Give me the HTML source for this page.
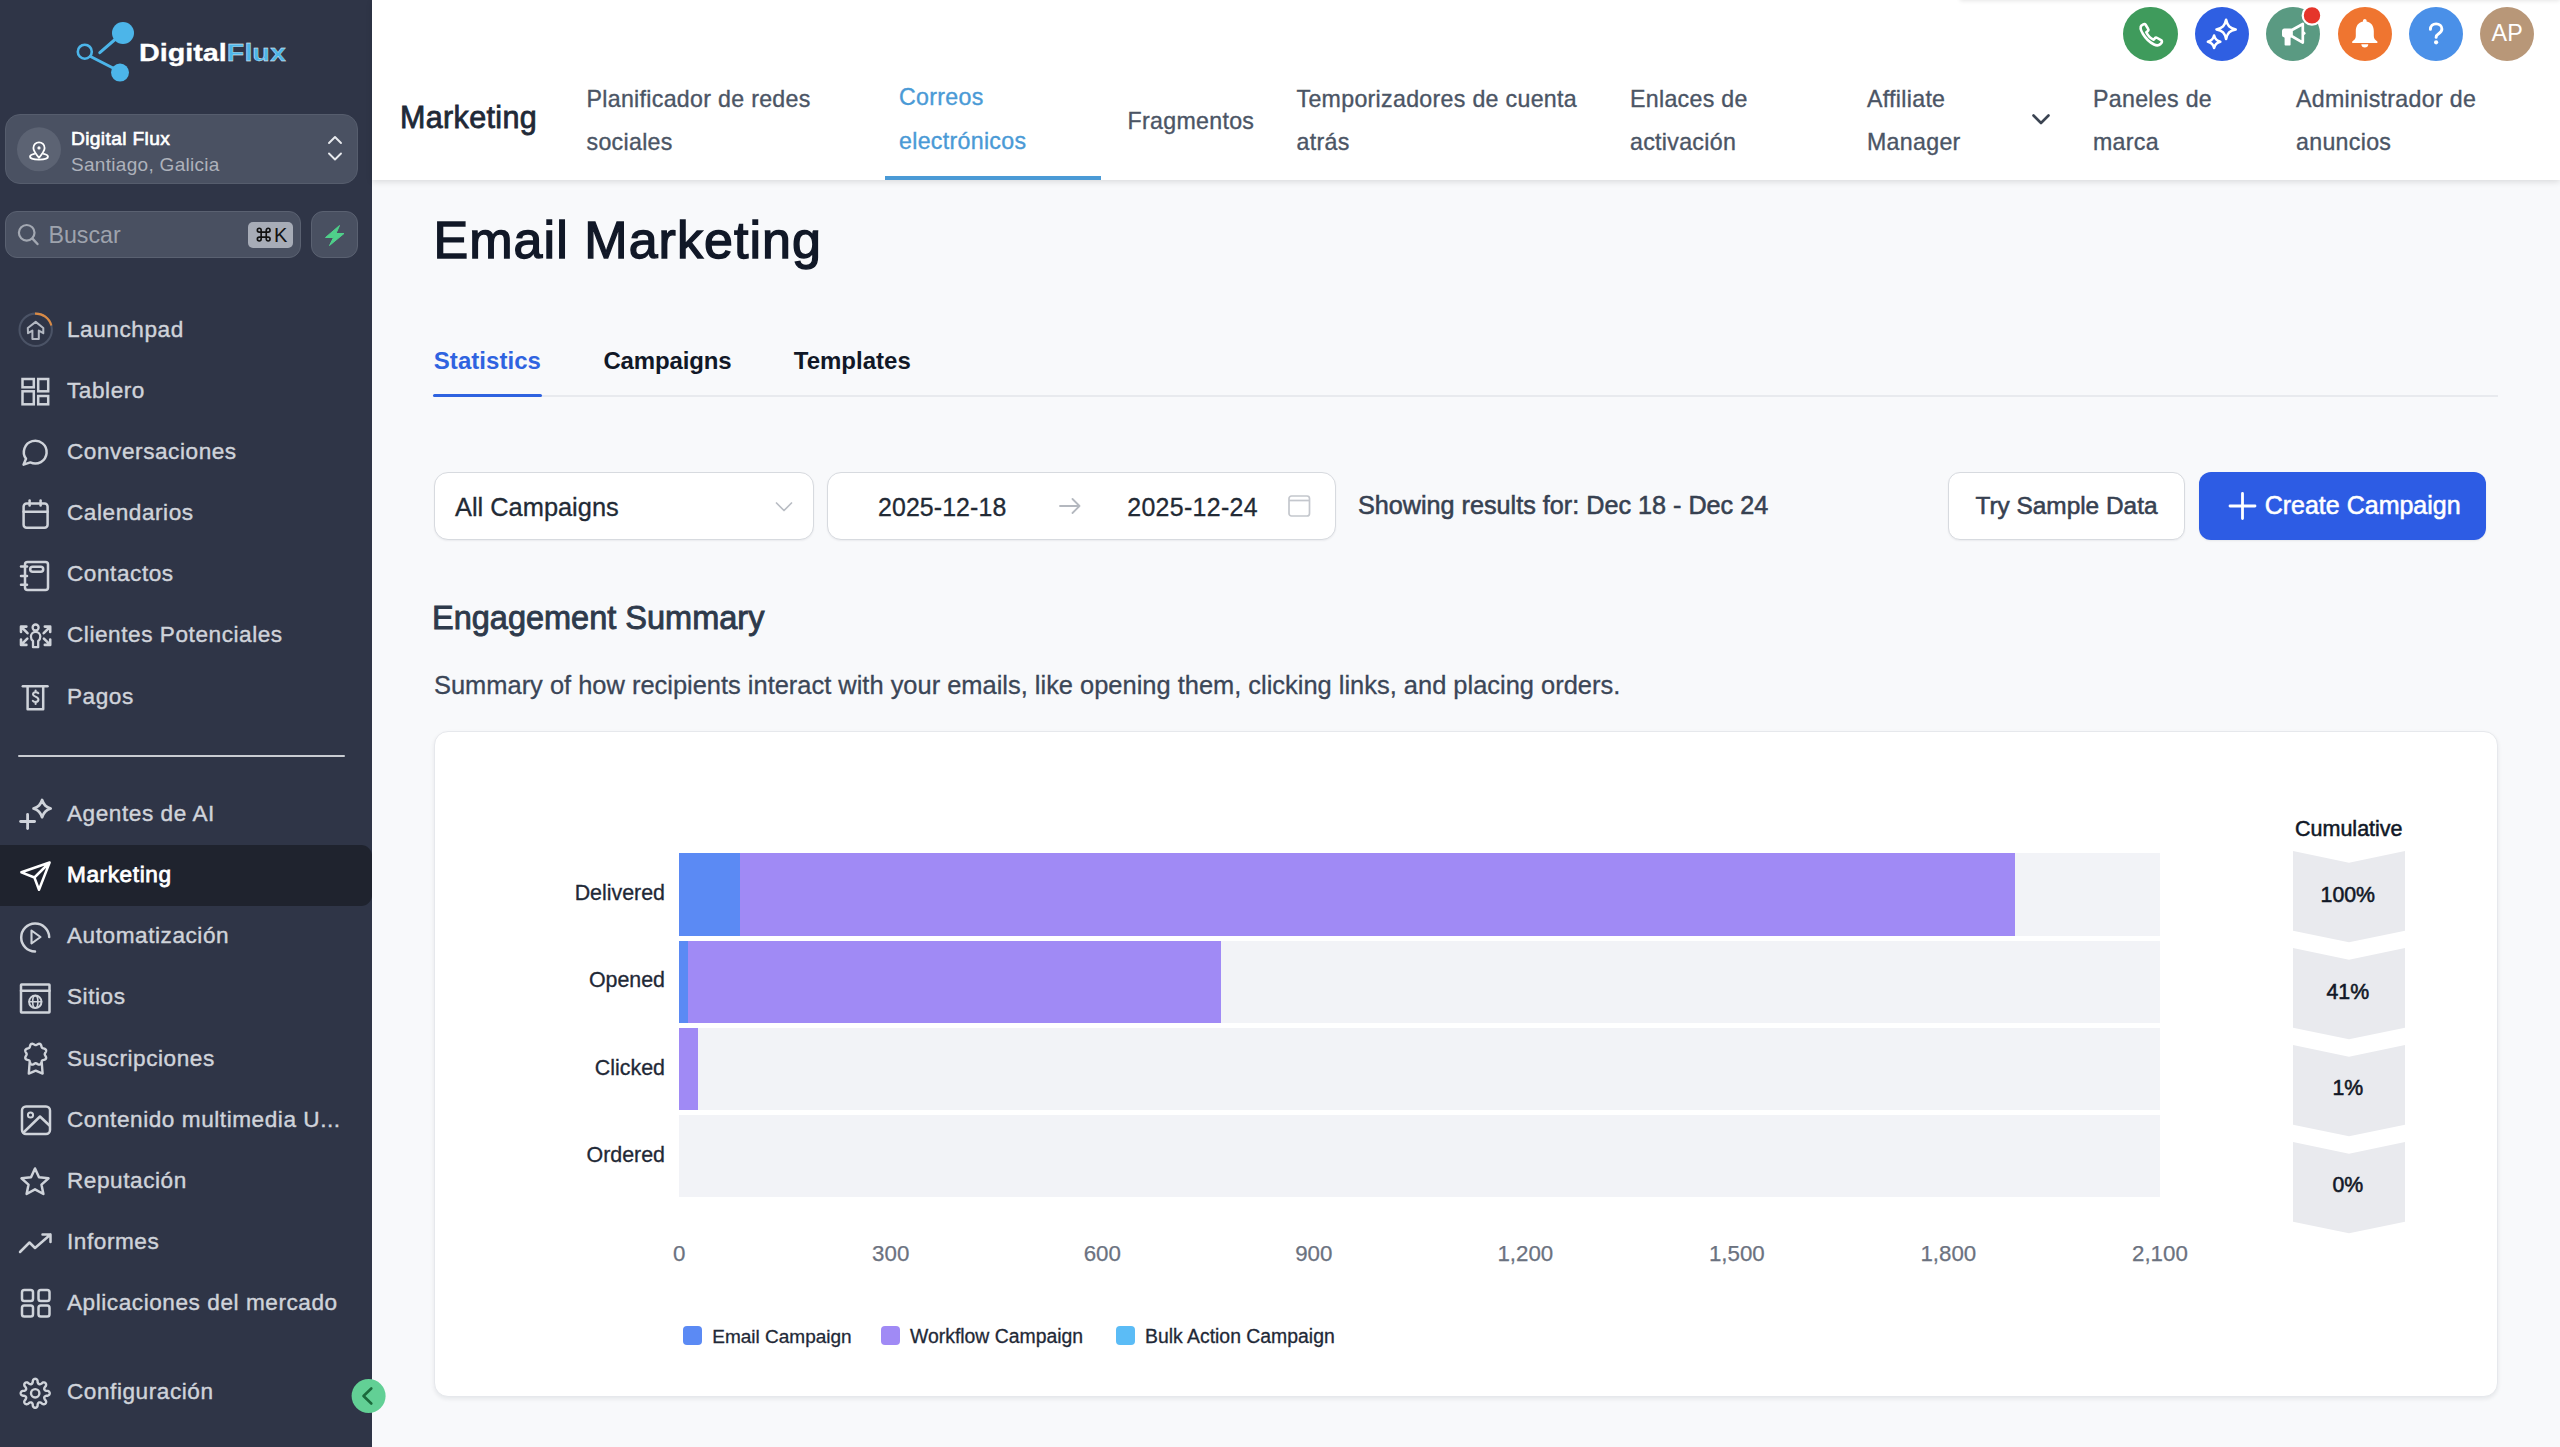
<!DOCTYPE html>
<html><head><meta charset="utf-8">
<style>
html,body{margin:0;padding:0;width:2560px;height:1447px;overflow:hidden;background:#f8f9fb;font-family:"Liberation Sans",sans-serif;}
.t{position:absolute;line-height:1;white-space:nowrap;}
.b{position:absolute;}
svg.b{overflow:visible;}
</style></head><body>

<div class="b" style="left:0px;top:0px;width:372px;height:1447px;background:#2f3547;"></div><svg class="b" style="left:0;top:0" width="372" height="100" viewBox="0 0 372 100">
<g fill="#4cb5e9" stroke="#4cb5e9">
<circle cx="84.8" cy="51.7" r="7" fill="none" stroke-width="2.6"/>
<circle cx="123" cy="33" r="11" stroke="none"/>
<circle cx="120" cy="72.6" r="9" stroke="none"/>
<line x1="99.8" y1="52.7" x2="115" y2="39.5" stroke-width="3" stroke-linecap="round"/>
<line x1="90.5" y1="56.5" x2="113" y2="68" stroke-width="3" stroke-linecap="round"/>
</g></svg><div class="t" style="top:41.62px;font-size:23.6px;color:#ffffff;font-weight:700;left:139.00px;transform:scaleX(1.218);transform-origin:0 0;-webkit-text-stroke:0.3px #fff;">Digital<span style="color:#4cb5e9">Flux</span></div><div class="b" style="left:5px;top:114px;width:353px;height:70px;background:#4a5162;border:1px solid #565d6d;border-radius:15px;box-sizing:border-box;"></div><svg class="b" style="left:16px;top:127px" width="46" height="46" viewBox="0 0 46 46">
<circle cx="23" cy="22.3" r="22" fill="#5c6373"/>
<path d="M23 30.8 C19.6 26.6 17.4 23.9 17.4 20.9 A5.6 5.6 0 0 1 28.6 20.9 C28.6 23.9 26.4 26.6 23 30.8 Z" fill="none" stroke="#fff" stroke-width="1.8" stroke-linejoin="round"/>
<circle cx="23" cy="20.9" r="1.6" fill="#fff"/>
<path d="M18.2 26.9 C15 27.6 14 28.8 14 29.7 C14 31.4 18 32.6 23 32.6 C28 32.6 32 31.4 32 29.7 C32 28.8 31 27.6 27.8 26.9" fill="none" stroke="#fff" stroke-width="1.8" stroke-linecap="round"/>
</svg><div class="t" style="top:129.04px;font-size:19.2px;color:#ffffff;font-weight:400;letter-spacing:0.35px;left:71.00px;-webkit-text-stroke:0.65px #fff;">Digital Flux</div><div class="t" style="top:155.11px;font-size:19px;color:#aeb2bb;font-weight:400;letter-spacing:0.3px;left:71.00px;">Santiago, Galicia</div><svg class="b" style="left:324px;top:132px" width="22" height="32" viewBox="0 0 22 32">
<path d="M5 11 L11 5 L17 11" fill="none" stroke="#e8eaee" stroke-width="1.9" stroke-linecap="round" stroke-linejoin="round"/>
<path d="M5 21.5 L11 27.5 L17 21.5" fill="none" stroke="#e8eaee" stroke-width="1.9" stroke-linecap="round" stroke-linejoin="round"/>
</svg><div class="b" style="left:5px;top:211px;width:296px;height:47px;background:#495061;border:1px solid #5a6171;border-radius:12px;box-sizing:border-box;"></div><svg class="b" style="left:10px;top:216px" width="40" height="40" viewBox="0 0 40 40">
<circle cx="16.7" cy="16.8" r="7.8" fill="none" stroke="#a3a8b2" stroke-width="2.2"/>
<line x1="22.5" y1="22.6" x2="27.5" y2="28" stroke="#a3a8b2" stroke-width="2.4" stroke-linecap="round"/>
</svg><div class="t" style="top:223.56px;font-size:23.2px;color:#9ea3ad;font-weight:400;left:48.50px;">Buscar</div><div class="b" style="left:248px;top:222px;width:45px;height:26px;background:#a7acb7;border-radius:5px;"></div><svg class="b" style="left:0;top:0" width="372" height="300" viewBox="0 0 372 300"><path d="M261.15 230.15 A1.9 1.9 0 1 0 259.25 232.05 M261.15 239.05 A1.9 1.9 0 1 1 259.25 237.15 M266.25 230.15 A1.9 1.9 0 1 1 268.15 232.05 M266.25 239.05 A1.9 1.9 0 1 0 268.15 237.15 M259.25 232.05 L268.15 232.05 M259.25 237.15 L268.15 237.15 M261.15 230.15 L261.15 239.05 M266.25 230.15 L266.25 239.05" fill="none" stroke="#111" stroke-width="1.65"/></svg><div class="t" style="top:225.37px;font-size:20px;color:#111;font-weight:400;left:274.00px;">K</div><div class="b" style="left:311px;top:211px;width:47px;height:47px;background:#495061;border:1px solid #5a6171;border-radius:12px;box-sizing:border-box;"></div><svg class="b" style="left:320px;top:221px" width="30" height="30" viewBox="0 0 30 30">
<path d="M19.5 4.5 L5.5 16.5 L13.5 16.5 L9.5 24.5 L24 12.5 L16 12.5 Z" fill="#4fd08a" stroke="#4fd08a" stroke-width="1" stroke-linejoin="round"/>
</svg><div class="t" style="top:318.96px;font-size:22.6px;color:#cfd3da;font-weight:400;letter-spacing:0.55px;left:67.00px;-webkit-text-stroke:0.4px #cfd3da;">Launchpad</div><div class="t" style="top:380.06px;font-size:22.6px;color:#cfd3da;font-weight:400;letter-spacing:0.55px;left:67.00px;-webkit-text-stroke:0.4px #cfd3da;">Tablero</div><div class="t" style="top:441.16px;font-size:22.6px;color:#cfd3da;font-weight:400;letter-spacing:0.55px;left:67.00px;-webkit-text-stroke:0.4px #cfd3da;">Conversaciones</div><div class="t" style="top:502.26px;font-size:22.6px;color:#cfd3da;font-weight:400;letter-spacing:0.55px;left:67.00px;-webkit-text-stroke:0.4px #cfd3da;">Calendarios</div><div class="t" style="top:563.36px;font-size:22.6px;color:#cfd3da;font-weight:400;letter-spacing:0.55px;left:67.00px;-webkit-text-stroke:0.4px #cfd3da;">Contactos</div><div class="t" style="top:624.46px;font-size:22.6px;color:#cfd3da;font-weight:400;letter-spacing:0.55px;left:67.00px;-webkit-text-stroke:0.4px #cfd3da;">Clientes Potenciales</div><div class="t" style="top:685.56px;font-size:22.6px;color:#cfd3da;font-weight:400;letter-spacing:0.55px;left:67.00px;-webkit-text-stroke:0.4px #cfd3da;">Pagos</div><div class="b" style="left:18px;top:755px;width:327px;height:2px;background:#c9ccd2;border-radius:1px;"></div><div class="b" style="left:0px;top:845px;width:372px;height:61px;background:#1f232e;border-radius:0 11px 11px 0;"></div><div class="t" style="top:803.16px;font-size:22.6px;color:#cfd3da;font-weight:400;letter-spacing:0.55px;left:67.00px;-webkit-text-stroke:0.4px #cfd3da;">Agentes de AI</div><div class="t" style="top:864.26px;font-size:22.6px;color:#ffffff;font-weight:400;letter-spacing:0.6px;left:67.00px;-webkit-text-stroke:0.8px #fff;">Marketing</div><div class="t" style="top:925.36px;font-size:22.6px;color:#cfd3da;font-weight:400;letter-spacing:0.55px;left:67.00px;-webkit-text-stroke:0.4px #cfd3da;">Automatización</div><div class="t" style="top:986.46px;font-size:22.6px;color:#cfd3da;font-weight:400;letter-spacing:0.55px;left:67.00px;-webkit-text-stroke:0.4px #cfd3da;">Sitios</div><div class="t" style="top:1047.56px;font-size:22.6px;color:#cfd3da;font-weight:400;letter-spacing:0.55px;left:67.00px;-webkit-text-stroke:0.4px #cfd3da;">Suscripciones</div><div class="t" style="top:1108.66px;font-size:22.6px;color:#cfd3da;font-weight:400;letter-spacing:0.55px;left:67.00px;-webkit-text-stroke:0.4px #cfd3da;">Contenido multimedia U...</div><div class="t" style="top:1169.76px;font-size:22.6px;color:#cfd3da;font-weight:400;letter-spacing:0.55px;left:67.00px;-webkit-text-stroke:0.4px #cfd3da;">Reputación</div><div class="t" style="top:1230.86px;font-size:22.6px;color:#cfd3da;font-weight:400;letter-spacing:0.55px;left:67.00px;-webkit-text-stroke:0.4px #cfd3da;">Informes</div><div class="t" style="top:1291.96px;font-size:22.6px;color:#cfd3da;font-weight:400;letter-spacing:0.55px;left:67.00px;-webkit-text-stroke:0.4px #cfd3da;">Aplicaciones del mercado</div><div class="t" style="top:1380.86px;font-size:22.6px;color:#cfd3da;font-weight:400;letter-spacing:0.55px;left:67.00px;-webkit-text-stroke:0.4px #cfd3da;">Configuración</div><svg class="b" style="left:0;top:0" width="372" height="1447" viewBox="0 0 372 1447">
<g fill="none" stroke="#cfd3da" stroke-width="2.5" stroke-linecap="round" stroke-linejoin="round">
<!-- Launchpad -->
<circle cx="35.7" cy="329.8" r="16.2" stroke="#4b5366" stroke-width="2.1"/>
<path d="M35 313.6 A16.2 16.2 0 0 1 51.4 325.6" stroke="#d98a45" stroke-width="2.1" stroke-linecap="butt"/>
<path d="M35.7 321.9 L27.8 328 L28 333.2 L32.4 330.6 L32.4 339 L38.8 339 L38.8 330.6 L43.3 333.2 L43.3 328 Z" stroke="#b3b8c2" stroke-width="2" stroke-linejoin="round"/>
<!-- Tablero -->
<rect x="22.5" y="379" width="11.3" height="8.3" stroke-linejoin="miter"/>
<rect x="22.5" y="391.3" width="11.3" height="13" stroke-linejoin="miter"/>
<rect x="38.2" y="379" width="10" height="12.3" stroke-linejoin="miter"/>
<rect x="38.2" y="396" width="10" height="8.3" stroke-linejoin="miter"/>
<!-- Conversaciones -->
<path d="M26 458.8 A11.4 11.4 0 1 1 30.3 462.4 L23.6 464.6 Z" />
<!-- Calendarios -->
<rect x="23.6" y="503.5" width="24" height="24.2" rx="3"/>
<line x1="23.6" y1="511.8" x2="47.6" y2="511.8"/>
<line x1="29.6" y1="500.6" x2="29.6" y2="505.5"/>
<line x1="40.6" y1="500.6" x2="40.6" y2="505.5"/>
<!-- Contactos -->
<rect x="25" y="562" width="23" height="28" rx="2.5"/>
<rect x="30.2" y="566.8" width="13" height="5" rx="2.5"/>
<line x1="21" y1="566.6" x2="27" y2="566.6"/>
<line x1="21" y1="576" x2="27" y2="576"/>
<line x1="21" y1="584.8" x2="27" y2="584.8"/>
<!-- Clientes Potenciales -->
<circle cx="35.6" cy="627.5" r="3" stroke-width="2.3"/>
<path d="M33 647.2 L33 641 C31.6 640 30.9 638.5 30.9 636.6 A4.7 4.7 0 0 1 40.3 636.6 C40.3 638.5 39.6 640 38.2 641 L38.2 647.2 Z" stroke-width="2.3"/>
<path d="M21 632 L21 626.6 L26.4 626.6 M21.5 627.1 L27.5 633.2" stroke-width="2.6"/>
<path d="M50.2 632 L50.2 626.6 L44.8 626.6 M49.7 627.1 L43.7 633.2" stroke-width="2.6"/>
<path d="M21 639.5 L21 644.9 L26.4 644.9 M21.5 644.4 L27.3 638.6" stroke-width="2.6"/>
<path d="M50.2 639.5 L50.2 644.9 L44.8 644.9 M49.7 644.4 L43.9 638.6" stroke-width="2.6"/>
<!-- Pagos -->
<line x1="22.8" y1="686.3" x2="47.5" y2="686.3"/>
<path d="M27.6 686.3 L27.6 709.3 L43.2 709.3 L43.2 686.3" />
<path d="M38.3 693.2 C37.6 692 33.3 691.6 33 694.3 C32.8 696.8 38.5 696.5 38.4 699.6 C38.3 702.5 33.8 702.4 32.8 700.8 M35.6 690.6 L35.6 692 M35.6 702.6 L35.6 704" stroke-width="2.1"/>
<!-- Agentes de AI -->
<path d="M42.1 800.0 C43.9 805.0 45.7 806.8000000000001 50.7 808.6 C45.7 810.4 43.9 812.2 42.1 817.2 C40.300000000000004 812.2 38.5 810.4 33.5 808.6 C38.5 806.8000000000001 40.300000000000004 805.0 42.1 800.0 Z" stroke-width="2.7"/>
<line x1="27.6" y1="814.5" x2="27.6" y2="828.5" stroke-width="2.8"/>
<line x1="20.6" y1="821.5" x2="34.6" y2="821.5" stroke-width="2.8"/>
<!-- Marketing (active) -->
<path d="M49.6 862.5 L21.4 872.3 L34.4 877.5 L39 889.8 Z M34.4 877.5 L49.6 862.5" stroke="#ffffff" stroke-width="2.5"/>
<!-- Automatización -->
<path d="M49.2 937 A14 14 0 1 0 35 951.5" />
<path d="M49.2 937 A14 14 0 0 0 42 924.5" stroke="none"/>
<path d="M31.5 930.5 L40.5 937 L31.5 943.5 Z" stroke-width="2.1"/>
<!-- Sitios -->
<rect x="21" y="984.5" width="28.5" height="28" rx="0.5"/>
<line x1="21" y1="990.8" x2="49.5" y2="990.8"/>
<circle cx="35.3" cy="1001.8" r="6.2" stroke-width="2"/>
<line x1="29.1" y1="1001.8" x2="41.5" y2="1001.8" stroke-width="1.6"/>
<ellipse cx="35.3" cy="1001.8" rx="2.6" ry="6.2" stroke-width="1.6"/>
<!-- Suscripciones -->
<path d="M35.70 1045.15 L36.06 1045.11 L36.43 1044.98 L36.81 1044.78 L37.23 1044.54 L37.67 1044.29 L38.13 1044.06 L38.61 1043.89 L39.08 1043.79 L39.54 1043.79 L39.97 1043.90 L40.35 1044.12 L40.67 1044.44 L40.94 1044.85 L41.15 1045.31 L41.31 1045.80 L41.45 1046.29 L41.57 1046.75 L41.71 1047.17 L41.88 1047.52 L42.10 1047.80 L42.38 1048.02 L42.73 1048.19 L43.15 1048.33 L43.61 1048.45 L44.10 1048.59 L44.59 1048.75 L45.05 1048.96 L45.46 1049.23 L45.78 1049.55 L46.00 1049.93 L46.11 1050.36 L46.11 1050.82 L46.01 1051.29 L45.84 1051.77 L45.61 1052.23 L45.36 1052.67 L45.12 1053.09 L44.92 1053.47 L44.79 1053.84 L44.75 1054.20 L44.79 1054.56 L44.92 1054.93 L45.12 1055.31 L45.36 1055.73 L45.61 1056.17 L45.84 1056.63 L46.01 1057.11 L46.11 1057.58 L46.11 1058.04 L46.00 1058.47 L45.78 1058.85 L45.46 1059.17 L45.05 1059.44 L44.59 1059.65 L44.10 1059.81 L43.61 1059.95 L43.15 1060.07 L42.73 1060.21 L42.38 1060.38 L42.10 1060.60 L41.88 1060.88 L41.71 1061.23 L41.57 1061.65 L41.45 1062.11 L41.31 1062.60 L41.15 1063.09 L40.94 1063.55 L40.67 1063.96 L40.35 1064.28 L39.97 1064.50 L39.54 1064.61 L39.08 1064.61 L38.61 1064.51 L38.13 1064.34 L37.67 1064.11 L37.23 1063.86 L36.81 1063.62 L36.43 1063.42 L36.06 1063.29 L35.70 1063.25 L35.34 1063.29 L34.97 1063.42 L34.59 1063.62 L34.17 1063.86 L33.73 1064.11 L33.27 1064.34 L32.79 1064.51 L32.32 1064.61 L31.86 1064.61 L31.43 1064.50 L31.05 1064.28 L30.73 1063.96 L30.46 1063.55 L30.25 1063.09 L30.09 1062.60 L29.95 1062.11 L29.83 1061.65 L29.69 1061.23 L29.52 1060.88 L29.30 1060.60 L29.02 1060.38 L28.67 1060.21 L28.25 1060.07 L27.79 1059.95 L27.30 1059.81 L26.81 1059.65 L26.35 1059.44 L25.94 1059.17 L25.62 1058.85 L25.40 1058.47 L25.29 1058.04 L25.29 1057.58 L25.39 1057.11 L25.56 1056.63 L25.79 1056.17 L26.04 1055.73 L26.28 1055.31 L26.48 1054.93 L26.61 1054.56 L26.65 1054.20 L26.61 1053.84 L26.48 1053.47 L26.28 1053.09 L26.04 1052.67 L25.79 1052.23 L25.56 1051.77 L25.39 1051.29 L25.29 1050.82 L25.29 1050.36 L25.40 1049.93 L25.62 1049.55 L25.94 1049.23 L26.35 1048.96 L26.81 1048.75 L27.30 1048.59 L27.79 1048.45 L28.25 1048.33 L28.67 1048.19 L29.02 1048.02 L29.30 1047.80 L29.52 1047.52 L29.69 1047.17 L29.83 1046.75 L29.95 1046.29 L30.09 1045.80 L30.25 1045.31 L30.46 1044.85 L30.73 1044.44 L31.05 1044.12 L31.43 1043.90 L31.86 1043.79 L32.32 1043.79 L32.79 1043.89 L33.27 1044.06 L33.73 1044.29 L34.17 1044.54 L34.59 1044.78 L34.97 1044.98 L35.34 1045.11 Z" stroke-width="2.4"/>
<path d="M29.6 1063 L28.8 1073.6 L35.7 1070.6 L42.6 1073.6 L41.8 1063" stroke-width="2.4"/>
<!-- Contenido multimedia -->
<rect x="22" y="1106.5" width="28" height="27.5" rx="4"/>
<circle cx="30.5" cy="1115" r="2.6" stroke-width="2"/>
<path d="M23.5 1132.5 L40 1116.5 L49.5 1125.5"/>
<!-- Reputacion -->
<path d="M35 1168.5 L39 1177.3 L48.5 1178.3 L41.5 1184.7 L43.4 1194 L35 1189.3 L26.6 1194 L28.5 1184.7 L21.5 1178.3 L31 1177.3 Z"/>
<!-- Informes -->
<path d="M20 1252 L29.5 1242.5 L35 1248 L50.5 1234.5 M42.5 1234.5 L50.5 1234.5 L50.5 1242"/>
<!-- Aplicaciones -->
<rect x="22" y="1290" width="11" height="11" rx="2.3"/>
<rect x="38.5" y="1290" width="11" height="11" rx="2.3"/>
<rect x="22" y="1305.5" width="11" height="11" rx="2.3"/>
<rect x="38.5" y="1305.5" width="11" height="11" rx="2.3"/>
<!-- Configuracion -->
<circle cx="35.2" cy="1393.3" r="4.2" stroke-width="2.4"/>
<path d="M35.20 1378.80 L35.65 1378.85 L36.10 1378.99 L36.53 1379.23 L36.93 1379.58 L37.30 1380.06 L37.58 1380.82 L37.66 1382.29 L37.88 1382.88 L38.10 1383.31 L38.34 1383.64 L38.58 1383.90 L38.85 1384.09 L39.14 1384.21 L39.45 1384.26 L39.81 1384.25 L40.21 1384.18 L40.68 1384.04 L41.25 1383.77 L42.34 1382.79 L43.08 1382.45 L43.68 1382.37 L44.21 1382.41 L44.68 1382.54 L45.10 1382.76 L45.45 1383.05 L45.74 1383.40 L45.96 1383.82 L46.09 1384.29 L46.13 1384.82 L46.05 1385.42 L45.71 1386.16 L44.73 1387.25 L44.46 1387.82 L44.32 1388.29 L44.25 1388.69 L44.24 1389.05 L44.29 1389.36 L44.41 1389.65 L44.60 1389.92 L44.86 1390.16 L45.19 1390.40 L45.62 1390.62 L46.21 1390.84 L47.68 1390.92 L48.44 1391.20 L48.92 1391.57 L49.27 1391.97 L49.51 1392.40 L49.65 1392.85 L49.70 1393.30 L49.65 1393.75 L49.51 1394.20 L49.27 1394.63 L48.92 1395.03 L48.44 1395.40 L47.68 1395.68 L46.21 1395.76 L45.62 1395.98 L45.19 1396.20 L44.86 1396.44 L44.60 1396.68 L44.41 1396.95 L44.29 1397.24 L44.24 1397.55 L44.25 1397.91 L44.32 1398.31 L44.46 1398.78 L44.73 1399.35 L45.71 1400.44 L46.05 1401.18 L46.13 1401.78 L46.09 1402.31 L45.96 1402.78 L45.74 1403.20 L45.45 1403.55 L45.10 1403.84 L44.68 1404.06 L44.21 1404.19 L43.68 1404.23 L43.08 1404.15 L42.34 1403.81 L41.25 1402.83 L40.68 1402.56 L40.21 1402.42 L39.81 1402.35 L39.45 1402.34 L39.14 1402.39 L38.85 1402.51 L38.58 1402.70 L38.34 1402.96 L38.10 1403.29 L37.88 1403.72 L37.66 1404.31 L37.58 1405.78 L37.30 1406.54 L36.93 1407.02 L36.53 1407.37 L36.10 1407.61 L35.65 1407.75 L35.20 1407.80 L34.75 1407.75 L34.30 1407.61 L33.87 1407.37 L33.47 1407.02 L33.10 1406.54 L32.82 1405.78 L32.74 1404.31 L32.52 1403.72 L32.30 1403.29 L32.06 1402.96 L31.82 1402.70 L31.55 1402.51 L31.26 1402.39 L30.95 1402.34 L30.59 1402.35 L30.19 1402.42 L29.72 1402.56 L29.15 1402.83 L28.06 1403.81 L27.32 1404.15 L26.72 1404.23 L26.19 1404.19 L25.72 1404.06 L25.30 1403.84 L24.95 1403.55 L24.66 1403.20 L24.44 1402.78 L24.31 1402.31 L24.27 1401.78 L24.35 1401.18 L24.69 1400.44 L25.67 1399.35 L25.94 1398.78 L26.08 1398.31 L26.15 1397.91 L26.16 1397.55 L26.11 1397.24 L25.99 1396.95 L25.80 1396.68 L25.54 1396.44 L25.21 1396.20 L24.78 1395.98 L24.19 1395.76 L22.72 1395.68 L21.96 1395.40 L21.48 1395.03 L21.13 1394.63 L20.89 1394.20 L20.75 1393.75 L20.70 1393.30 L20.75 1392.85 L20.89 1392.40 L21.13 1391.97 L21.48 1391.57 L21.96 1391.20 L22.72 1390.92 L24.19 1390.84 L24.78 1390.62 L25.21 1390.40 L25.54 1390.16 L25.80 1389.92 L25.99 1389.65 L26.11 1389.36 L26.16 1389.05 L26.15 1388.69 L26.08 1388.29 L25.94 1387.82 L25.67 1387.25 L24.69 1386.16 L24.35 1385.42 L24.27 1384.82 L24.31 1384.29 L24.44 1383.82 L24.66 1383.40 L24.95 1383.05 L25.30 1382.76 L25.72 1382.54 L26.19 1382.41 L26.72 1382.37 L27.32 1382.45 L28.06 1382.79 L29.15 1383.77 L29.72 1384.04 L30.19 1384.18 L30.59 1384.25 L30.95 1384.26 L31.26 1384.21 L31.55 1384.09 L31.82 1383.90 L32.06 1383.64 L32.30 1383.31 L32.52 1382.88 L32.74 1382.29 L32.82 1380.82 L33.10 1380.06 L33.47 1379.58 L33.87 1379.23 L34.30 1378.99 L34.75 1378.85 Z" stroke-width="2.4" stroke-linejoin="round"/>
</g>
</svg>
<svg class="b" style="left:350px;top:1378px" width="38" height="38" viewBox="0 0 38 38">
<circle cx="18.6" cy="18" r="17" fill="#62d095"/>
<path d="M21.3 10.5 L13.5 18 L21.3 25.5" fill="none" stroke="#1b6a3c" stroke-width="2.6" stroke-linecap="round" stroke-linejoin="round"/>
</svg><div class="b" style="left:372px;top:0px;width:2188px;height:180px;background:#ffffff;box-shadow:0 2px 6px rgba(0,0,0,0.12);"></div><div class="b" style="left:1960px;top:-10px;width:600px;height:10px;box-shadow:0 1px 4px rgba(0,0,0,0.10);background:#fff;"></div><div class="t" style="top:102.38px;font-size:30.5px;color:#1f2937;font-weight:400;letter-spacing:0.35px;left:400.00px;-webkit-text-stroke:0.8px #1f2937;">Marketing</div><div class="t" style="top:87.96px;font-size:23.2px;color:#4b5565;font-weight:400;letter-spacing:0.3px;left:586.50px;-webkit-text-stroke:0.35px #4b5565;">Planificador de redes</div><div class="t" style="top:130.86px;font-size:23.2px;color:#4b5565;font-weight:400;letter-spacing:0.3px;left:586.50px;-webkit-text-stroke:0.35px #4b5565;">sociales</div><div class="t" style="top:86.16px;font-size:23.2px;color:#4a9ad6;font-weight:400;letter-spacing:0.3px;left:899.00px;-webkit-text-stroke:0.35px #4a9ad6;">Correos</div><div class="t" style="top:129.56px;font-size:23.2px;color:#4a9ad6;font-weight:400;letter-spacing:0.3px;left:899.00px;-webkit-text-stroke:0.35px #4a9ad6;">electrónicos</div><div class="b" style="left:885px;top:176px;width:216px;height:4px;background:#4a9ad6;"></div><div class="t" style="top:109.76px;font-size:23.2px;color:#4b5565;font-weight:400;letter-spacing:0.3px;left:1127.50px;-webkit-text-stroke:0.35px #4b5565;">Fragmentos</div><div class="t" style="top:87.96px;font-size:23.2px;color:#4b5565;font-weight:400;letter-spacing:0.3px;left:1296.50px;-webkit-text-stroke:0.35px #4b5565;">Temporizadores de cuenta</div><div class="t" style="top:130.86px;font-size:23.2px;color:#4b5565;font-weight:400;letter-spacing:0.3px;left:1296.50px;-webkit-text-stroke:0.35px #4b5565;">atrás</div><div class="t" style="top:87.96px;font-size:23.2px;color:#4b5565;font-weight:400;letter-spacing:0.3px;left:1630.00px;-webkit-text-stroke:0.35px #4b5565;">Enlaces de</div><div class="t" style="top:130.86px;font-size:23.2px;color:#4b5565;font-weight:400;letter-spacing:0.3px;left:1630.00px;-webkit-text-stroke:0.35px #4b5565;">activación</div><div class="t" style="top:87.96px;font-size:23.2px;color:#4b5565;font-weight:400;letter-spacing:0.3px;left:1867.00px;-webkit-text-stroke:0.35px #4b5565;">Affiliate</div><div class="t" style="top:130.86px;font-size:23.2px;color:#4b5565;font-weight:400;letter-spacing:0.3px;left:1867.00px;-webkit-text-stroke:0.35px #4b5565;">Manager</div><svg class="b" style="left:2030px;top:110px" width="22" height="20" viewBox="0 0 22 20">
<path d="M3.5 5.5 L11 13 L18.5 5.5" fill="none" stroke="#3b4452" stroke-width="2.6" stroke-linecap="round" stroke-linejoin="round"/></svg><div class="t" style="top:87.96px;font-size:23.2px;color:#4b5565;font-weight:400;letter-spacing:0.3px;left:2093.00px;-webkit-text-stroke:0.35px #4b5565;">Paneles de</div><div class="t" style="top:130.86px;font-size:23.2px;color:#4b5565;font-weight:400;letter-spacing:0.3px;left:2093.00px;-webkit-text-stroke:0.35px #4b5565;">marca</div><div class="t" style="top:87.96px;font-size:23.2px;color:#4b5565;font-weight:400;letter-spacing:0.3px;left:2296.00px;-webkit-text-stroke:0.35px #4b5565;">Administrador de</div><div class="t" style="top:130.86px;font-size:23.2px;color:#4b5565;font-weight:400;letter-spacing:0.3px;left:2296.00px;-webkit-text-stroke:0.35px #4b5565;">anuncios</div><div class="b" style="left:2123.4px;top:6.8px;width:54.40000000000009px;height:54.400000000000006px;background:#3f9b5c;border-radius:50%;"></div><div class="b" style="left:2194.8px;top:6.8px;width:54.399999999999636px;height:54.400000000000006px;background:#2f5fe2;border-radius:50%;"></div><div class="b" style="left:2266.1px;top:6.8px;width:54.40000000000009px;height:54.400000000000006px;background:#5a9a82;border-radius:50%;"></div><div class="b" style="left:2337.6px;top:6.8px;width:54.40000000000009px;height:54.400000000000006px;background:#ef7530;border-radius:50%;"></div><div class="b" style="left:2408.8px;top:6.8px;width:54.399999999999636px;height:54.400000000000006px;background:#4a90e8;border-radius:50%;"></div><div class="b" style="left:2480.1px;top:6.8px;width:54.40000000000009px;height:54.400000000000006px;background:#b89778;border-radius:50%;"></div><svg class="b" style="left:2100px;top:0" width="460" height="80" viewBox="2100 0 460 80">
<g fill="none" stroke="#fff" stroke-width="2.6" stroke-linecap="round" stroke-linejoin="round">
<path d="M2141.5 25.5 C2140 27 2140.5 30 2143 34 C2146 39 2150 42.5 2154 44.5 C2157 46 2159 45.5 2160.5 44 L2161.5 42.8 C2162.3 41.8 2162 40.8 2161 40.2 L2157.3 38 C2156.3 37.4 2155.4 37.6 2154.8 38.4 L2153.7 39.7 C2151 38.6 2147.8 35.4 2146.3 32.3 L2147.6 31.2 C2148.4 30.6 2148.6 29.6 2148 28.7 L2145.8 25 C2145.2 24 2144.2 23.7 2143.3 24.4 Z"/>
</g>
<g fill="none" stroke="#fff" stroke-width="2.6" stroke-linejoin="round">
<path d="M2226.1 19.799999999999997 C2227.4 25.799999999999997 2229.7 28.099999999999998 2235.7 29.4 C2229.7 30.7 2227.4 33.0 2226.1 39.0 C2224.7999999999997 33.0 2222.5 30.7 2216.5 29.4 C2222.5 28.099999999999998 2224.7999999999997 25.799999999999997 2226.1 19.799999999999997 Z"/>
<path d="M2214.1 35.5 C2215.0 39.300000000000004 2216.5 40.800000000000004 2220.2999999999997 41.7 C2216.5 42.6 2215.0 44.1 2214.1 47.900000000000006 C2213.2 44.1 2211.7 42.6 2207.9 41.7 C2211.7 40.800000000000004 2213.2 39.300000000000004 2214.1 35.5 Z"/>
</g>
<g fill="#fff">
<path d="M2284.3 28.6 L2291.5 28.6 L2291.5 37.4 L2284.3 37.4 C2283 37.4 2282 36.4 2282 35.1 L2282 30.9 C2282 29.6 2283 28.6 2284.3 28.6 Z"/>
<rect x="2284.6" y="36.5" width="6" height="9.1" rx="0.8"/>
<path d="M2291.5 30.2 L2302.8 24 L2302.8 42.6 L2291.5 36 Z" fill="none" stroke="#fff" stroke-width="2.7" stroke-linejoin="round"/>
<circle cx="2303.8" cy="33.3" r="1.7"/>
</g>
<circle cx="2312" cy="15.4" r="9.3" fill="#e5352b" stroke="#fff" stroke-width="2.2"/>
<g fill="#fff">
<path d="M2364.8 19 C2365.8 19 2366.6 19.8 2366.6 20.8 L2366.6 21.4 C2371.5 22.4 2373.8 26 2373.8 31 L2373.8 36 C2373.8 38.5 2375.2 40 2377.3 41.5 C2377.8 42 2377.6 43 2376.8 43 L2352.8 43 C2352 43 2351.8 42 2352.3 41.5 C2354.4 40 2355.8 38.5 2355.8 36 L2355.8 31 C2355.8 26 2358.1 22.4 2363 21.4 L2363 20.8 C2363 19.8 2363.8 19 2364.8 19 Z"/>
<path d="M2361.3 44.3 L2368.3 44.3 C2368.3 46.3 2366.8 47.6 2364.8 47.6 C2362.8 47.6 2361.3 46.3 2361.3 44.3 Z"/>
</g>
<path d="M2430.4 29.4 C2430.4 25.9 2432.9 23.9 2436.1 23.9 C2439.4 23.9 2441.9 26.1 2441.9 29.1 C2441.9 31.8 2440 32.9 2438.3 33.9 C2436.7 34.8 2436.1 35.7 2436.1 37.4" fill="none" stroke="#fff" stroke-width="2.9" stroke-linecap="round"/>
<circle cx="2436.1" cy="42.3" r="2.1" fill="#fff"/>
</svg><div class="t" style="top:21.97px;font-size:23.3px;color:#ffffff;font-weight:400;letter-spacing:0.2px;left:1907.30px;width:1200px;text-align:center;">AP</div><div class="t" style="top:214.17px;font-size:52px;color:#111827;font-weight:400;letter-spacing:1.05px;left:433.50px;-webkit-text-stroke:1.4px #111827;">Email Marketing</div><div class="t" style="top:348.68px;font-size:24px;color:#2f63e0;font-weight:700;letter-spacing:0.05px;left:433.80px;">Statistics</div><div class="t" style="top:348.68px;font-size:24px;color:#111827;font-weight:700;letter-spacing:-0.15px;left:603.40px;">Campaigns</div><div class="t" style="top:348.68px;font-size:24px;color:#111827;font-weight:700;left:793.80px;">Templates</div><div class="b" style="left:433px;top:395px;width:2065px;height:2px;background:#e8eaee;"></div><div class="b" style="left:433px;top:394px;width:109px;height:3px;background:#2f63e0;border-radius:2px;"></div><div class="b" style="left:434px;top:472px;width:379.5px;height:67.70000000000005px;background:#fff;border:1.7px solid #d7dadf;border-radius:14px;box-sizing:border-box;box-shadow:0 1px 2px rgba(16,24,40,0.06);"></div><div class="t" style="top:494.79px;font-size:25.4px;color:#222a35;font-weight:400;left:455.00px;-webkit-text-stroke:0.3px #222a35;">All Campaigns</div><svg class="b" style="left:770px;top:495px" width="28" height="22" viewBox="0 0 28 22">
<path d="M6.5 8 L14 15.5 L21.5 8" fill="none" stroke="#b9bdc4" stroke-width="1.7" stroke-linecap="round" stroke-linejoin="round"/></svg><div class="b" style="left:827px;top:472px;width:509.20000000000005px;height:67.70000000000005px;background:#fff;border:1.7px solid #d7dadf;border-radius:14px;box-sizing:border-box;box-shadow:0 1px 2px rgba(16,24,40,0.06);"></div><div class="t" style="top:494.72px;font-size:24.9px;color:#222a35;font-weight:400;letter-spacing:0.1px;left:878.00px;-webkit-text-stroke:0.3px #222a35;">2025-12-18</div><div class="t" style="top:494.72px;font-size:24.9px;color:#222a35;font-weight:400;letter-spacing:0.35px;left:1127.20px;-webkit-text-stroke:0.3px #222a35;">2025-12-24</div><svg class="b" style="left:1050px;top:490px" width="40" height="32" viewBox="0 0 40 32">
<path d="M10 16 L29.5 16 M22.5 9 L29.5 16 L22.5 23" fill="none" stroke="#b4b8bf" stroke-width="1.8" stroke-linecap="round" stroke-linejoin="round"/></svg><svg class="b" style="left:1284px;top:490px" width="32" height="32" viewBox="0 0 32 32">
<rect x="5" y="6" width="20.5" height="20" rx="2.5" fill="none" stroke="#c4c7cd" stroke-width="1.7"/>
<line x1="5" y1="10.5" x2="25.5" y2="10.5" stroke="#c4c7cd" stroke-width="1.7"/></svg><div class="t" style="top:493.26px;font-size:25.2px;color:#374151;font-weight:400;left:1358.00px;-webkit-text-stroke:0.55px #374151;">Showing results for: Dec 18 - Dec 24</div><div class="b" style="left:1948px;top:472px;width:236.5999999999999px;height:67.70000000000005px;background:#fff;border:1.7px solid #d7dadf;border-radius:12px;box-sizing:border-box;box-shadow:0 1px 2px rgba(16,24,40,0.06);"></div><div class="t" style="top:493.94px;font-size:24.4px;color:#374151;font-weight:400;left:1975.40px;-webkit-text-stroke:0.55px #374151;">Try Sample Data</div><div class="b" style="left:2199px;top:472px;width:286.5px;height:67.70000000000005px;background:#2d5ce4;border-radius:12px;box-shadow:0 1px 2px rgba(16,24,40,0.08);"></div><svg class="b" style="left:2226px;top:490px" width="34" height="32" viewBox="0 0 34 32">
<path d="M16.5 3.5 L16.5 28.5 M4 16 L29 16" fill="none" stroke="#fff" stroke-width="2.8" stroke-linecap="round"/></svg><div class="t" style="top:493.43px;font-size:25px;color:#ffffff;font-weight:400;left:2264.70px;-webkit-text-stroke:0.55px #ffffff;">Create Campaign</div><div class="t" style="top:602.48px;font-size:32.5px;color:#2e3a4b;font-weight:400;left:432.00px;-webkit-text-stroke:0.9px #2e3a4b;">Engagement Summary</div><div class="t" style="top:673.45px;font-size:25.45px;color:#3b4657;font-weight:400;left:434.00px;-webkit-text-stroke:0.3px #3b4657;">Summary of how recipients interact with your emails, like opening them, clicking links, and placing orders.</div><div class="b" style="left:434px;top:731px;width:2064px;height:666px;background:#fff;border:1px solid #e6e8ec;border-radius:14px;box-sizing:border-box;box-shadow:0 2px 4px rgba(16,24,40,0.08);"></div><div class="b" style="left:679.2px;top:853.3px;width:1480.7px;height:82.5px;background:#f2f3f7;"></div><div class="b" style="left:679.2px;top:940.5px;width:1480.7px;height:82.5px;background:#f2f3f7;"></div><div class="b" style="left:679.2px;top:1027.7px;width:1480.7px;height:82.5px;background:#f2f3f7;"></div><div class="b" style="left:679.2px;top:1114.9px;width:1480.7px;height:82.5px;background:#f2f3f7;"></div><div class="b" style="left:679.2px;top:853.3px;width:61.09999999999991px;height:82.5px;background:#5b8af4;"></div><div class="b" style="left:740.3px;top:853.3px;width:1274.4px;height:82.5px;background:#a08af5;"></div><div class="b" style="left:679.2px;top:940.5px;width:8.399999999999977px;height:82.5px;background:#5b8af4;"></div><div class="b" style="left:687.6px;top:940.5px;width:533.6999999999999px;height:82.5px;background:#a08af5;"></div><div class="b" style="left:679.2px;top:1027.7px;width:18.699999999999932px;height:82.5px;background:#a08af5;"></div><div class="t" style="top:883.13px;font-size:21.4px;color:#1f2937;font-weight:400;right:1895.00px;-webkit-text-stroke:0.3px #1f2937;">Delivered</div><div class="t" style="top:970.38px;font-size:21.4px;color:#1f2937;font-weight:400;right:1895.00px;-webkit-text-stroke:0.3px #1f2937;">Opened</div><div class="t" style="top:1057.68px;font-size:21.4px;color:#1f2937;font-weight:400;right:1895.00px;-webkit-text-stroke:0.3px #1f2937;">Clicked</div><div class="t" style="top:1144.98px;font-size:21.4px;color:#1f2937;font-weight:400;right:1895.00px;-webkit-text-stroke:0.3px #1f2937;">Ordered</div><div class="t" style="top:1243.32px;font-size:22.3px;color:#6b7280;font-weight:400;left:79.20px;width:1200px;text-align:center;-webkit-text-stroke:0.25px #6b7280;">0</div><div class="t" style="top:1243.32px;font-size:22.3px;color:#6b7280;font-weight:400;left:290.73px;width:1200px;text-align:center;-webkit-text-stroke:0.25px #6b7280;">300</div><div class="t" style="top:1243.32px;font-size:22.3px;color:#6b7280;font-weight:400;left:502.26px;width:1200px;text-align:center;-webkit-text-stroke:0.25px #6b7280;">600</div><div class="t" style="top:1243.32px;font-size:22.3px;color:#6b7280;font-weight:400;left:713.79px;width:1200px;text-align:center;-webkit-text-stroke:0.25px #6b7280;">900</div><div class="t" style="top:1243.32px;font-size:22.3px;color:#6b7280;font-weight:400;left:925.31px;width:1200px;text-align:center;-webkit-text-stroke:0.25px #6b7280;">1,200</div><div class="t" style="top:1243.32px;font-size:22.3px;color:#6b7280;font-weight:400;left:1136.84px;width:1200px;text-align:center;-webkit-text-stroke:0.25px #6b7280;">1,500</div><div class="t" style="top:1243.32px;font-size:22.3px;color:#6b7280;font-weight:400;left:1348.37px;width:1200px;text-align:center;-webkit-text-stroke:0.25px #6b7280;">1,800</div><div class="t" style="top:1243.32px;font-size:22.3px;color:#6b7280;font-weight:400;left:1559.90px;width:1200px;text-align:center;-webkit-text-stroke:0.25px #6b7280;">2,100</div><div class="t" style="top:818.80px;font-size:21.5px;color:#111827;font-weight:400;left:2295.00px;-webkit-text-stroke:0.5px #111827;">Cumulative</div><svg class="b" style="left:2293.4px;top:851.3px" width="112" height="92" viewBox="0 0 112 92">
<path d="M0 0 L56 11.7 L112 0 L112 79.7 L56 91.3 L0 79.7 Z" fill="#e9eaee"/></svg><div class="t" style="top:884.77px;font-size:21.3px;color:#111827;font-weight:400;left:1747.80px;width:1200px;text-align:center;-webkit-text-stroke:0.55px #111827;">100%</div><svg class="b" style="left:2293.4px;top:948.1px" width="112" height="92" viewBox="0 0 112 92">
<path d="M0 0 L56 11.7 L112 0 L112 79.7 L56 91.3 L0 79.7 Z" fill="#e9eaee"/></svg><div class="t" style="top:981.57px;font-size:21.3px;color:#111827;font-weight:400;left:1747.80px;width:1200px;text-align:center;-webkit-text-stroke:0.55px #111827;">41%</div><svg class="b" style="left:2293.4px;top:1044.9px" width="112" height="92" viewBox="0 0 112 92">
<path d="M0 0 L56 11.7 L112 0 L112 79.7 L56 91.3 L0 79.7 Z" fill="#e9eaee"/></svg><div class="t" style="top:1078.37px;font-size:21.3px;color:#111827;font-weight:400;left:1747.80px;width:1200px;text-align:center;-webkit-text-stroke:0.55px #111827;">1%</div><svg class="b" style="left:2293.4px;top:1141.7px" width="112" height="92" viewBox="0 0 112 92">
<path d="M0 0 L56 11.7 L112 0 L112 79.7 L56 91.3 L0 79.7 Z" fill="#e9eaee"/></svg><div class="t" style="top:1175.17px;font-size:21.3px;color:#111827;font-weight:400;left:1747.80px;width:1200px;text-align:center;-webkit-text-stroke:0.55px #111827;">0%</div><div class="b" style="left:682.7px;top:1326px;width:19.299999999999955px;height:19.299999999999955px;background:#5b8af4;border-radius:4px;"></div><div class="t" style="top:1327.11px;font-size:19.0px;color:#1f2937;font-weight:400;left:712.30px;-webkit-text-stroke:0.3px #1f2937;">Email Campaign</div><div class="b" style="left:881px;top:1326px;width:19.299999999999955px;height:19.299999999999955px;background:#a08af5;border-radius:4px;"></div><div class="t" style="top:1326.77px;font-size:19.4px;color:#1f2937;font-weight:400;left:910.00px;-webkit-text-stroke:0.3px #1f2937;">Workflow Campaign</div><div class="b" style="left:1116px;top:1326px;width:19.299999999999955px;height:19.299999999999955px;background:#5bbcf6;border-radius:4px;"></div><div class="t" style="top:1326.77px;font-size:19.4px;color:#1f2937;font-weight:400;left:1145.00px;-webkit-text-stroke:0.3px #1f2937;">Bulk Action Campaign</div>
</body></html>
